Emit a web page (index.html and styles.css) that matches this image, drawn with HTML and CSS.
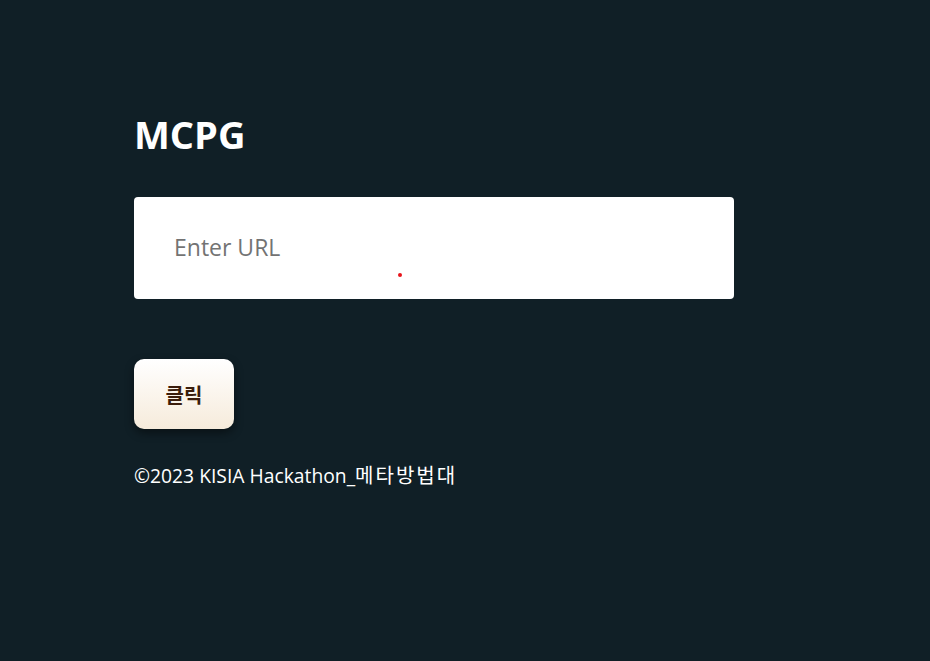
FILE: index.html
```html
<!DOCTYPE html>
<html lang="ko">
<head>
<meta charset="utf-8">
<title>MCPG</title>
<link rel="stylesheet" href="styles.css">
</head>
<body>
<main class="page">
  <h1 class="title">MCPG</h1>
  <div class="field">
    <input class="url-input" type="text" placeholder="Enter URL">
    <span class="dot"></span>
  </div>
  <button class="btn" type="button">클릭</button>
  <p class="footer">©2023 KISIA Hackathon_<span class="ko">메타방법대</span></p>
</main>
</body>
</html>
```
FILE: styles.css
```css
html, body {
  margin: 0;
  padding: 0;
  height: 100%;
  background: #101f26;
}
body {
  font-family: "Open Sans", "Noto Sans", "Noto Sans CJK KR", sans-serif;
  color: #ffffff;
}
.page {
  padding: 108px 0 0 134px;
  display: flex;
  flex-direction: column;
  align-items: flex-start;
}
.title {
  margin: 0;
  font-size: 38px;
  font-weight: 700;
  line-height: 52px;
}
.field {
  position: relative;
  margin-top: 37px;
  width: 600px;
  height: 102px;
  background: #fff;
  border-radius: 4px;
}
.url-input {
  box-sizing: border-box;
  width: 100%;
  height: 100px;
  border: none;
  outline: none;
  background: transparent;
  padding: 0 40px;
  font-family: "Open Sans", "Noto Sans", sans-serif;
  font-size: 23px;
  color: #333;
}
.url-input::placeholder {
  color: #737373;
}
.dot {
  position: absolute;
  left: 264px;
  top: 76px;
  width: 4px;
  height: 4px;
  border-radius: 50%;
  background: #e8141b;
}
.btn {
  margin-top: 60px;
  width: 100px;
  height: 70px;
  border: none;
  border-radius: 10px;
  background: linear-gradient(180deg, #ffffff 0%, #f6ebdb 100%);
  box-shadow: 0 4px 10px rgba(0, 0, 0, 0.45);
  font-family: "Noto Sans CJK KR", sans-serif;
  font-size: 20px;
  font-weight: 700;
  color: #3b1d0c;
  cursor: pointer;
}
.footer {
  margin: 32px 0 0;
  font-size: 19.3px;
  line-height: 28px;
  font-family: "Open Sans", "Noto Sans CJK KR", sans-serif;
}
.ko {
  font-family: "Noto Sans CJK KR", sans-serif;
  font-size: 20px;
  letter-spacing: 2px;
}
```
